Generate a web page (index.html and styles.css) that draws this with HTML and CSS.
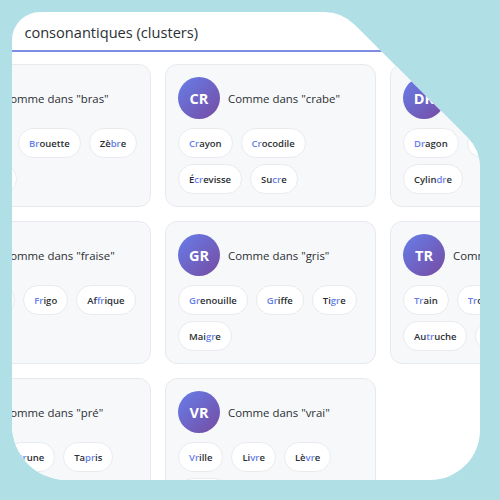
FILE: index.html
```html
<!DOCTYPE html>
<html lang="fr">
<head>
<meta charset="utf-8">
<title>Groupes consonantiques</title>
<link rel="stylesheet" href="styles.css">
</head>
<body>
<div class="panel">
  <div class="app">
    <header class="head"><h2 class="title"><span class="lead">Groupes</span>consonantiques (clusters)</h2></header>
    <div class="grid">
      <div class="card">
        <div class="card-head"><div class="avatar">BR</div><div class="label">Comme dans "bras"</div></div>
        <div class="chips">
          <span class="chip"><span class="hl">Br</span>ioche</span>
          <span class="chip"><span class="hl">Br</span>ouette</span>
          <span class="chip">Zè<span class="hl">br</span>e</span>
          <span class="chip">Cham<span class="hl">br</span>e</span>
        </div>
      </div>
      <div class="card">
        <div class="card-head"><div class="avatar">CR</div><div class="label">Comme dans "crabe"</div></div>
        <div class="chips">
          <span class="chip"><span class="hl">Cr</span>ayon</span>
          <span class="chip"><span class="hl">Cr</span>ocodile</span>
          <span class="chip">É<span class="hl">cr</span>evisse</span>
          <span class="chip">Su<span class="hl">cr</span>e</span>
        </div>
      </div>
      <div class="card">
        <div class="card-head"><div class="avatar">DR</div><div class="label">Comme dans "drap"</div></div>
        <div class="chips">
          <span class="chip"><span class="hl">Dr</span>agon</span>
          <span class="chip"><span class="hl">Dr</span>omadaire</span>
          <span class="chip">Cylin<span class="hl">dr</span>e</span>
        </div>
      </div>
      <div class="card">
        <div class="card-head"><div class="avatar">FR</div><div class="label">Comme dans "fraise"</div></div>
        <div class="chips">
          <span class="chip"><span class="hl">Fr</span>omage</span>
          <span class="chip"><span class="hl">Fr</span>igo</span>
          <span class="chip">Af<span class="hl">fr</span>ique</span>
        </div>
      </div>
      <div class="card">
        <div class="card-head"><div class="avatar">GR</div><div class="label">Comme dans "gris"</div></div>
        <div class="chips">
          <span class="chip"><span class="hl">Gr</span>enouille</span>
          <span class="chip"><span class="hl">Gr</span>iffe</span>
          <span class="chip">Ti<span class="hl">gr</span>e</span>
          <span class="chip">Mai<span class="hl">gr</span>e</span>
        </div>
      </div>
      <div class="card">
        <div class="card-head"><div class="avatar">TR</div><div class="label">Comme dans "train"</div></div>
        <div class="chips">
          <span class="chip"><span class="hl">Tr</span>ain</span>
          <span class="chip"><span class="hl">Tr</span>ompette</span>
          <span class="chip">Au<span class="hl">tr</span>uche</span>
          <span class="chip">Qua<span class="hl">tr</span>e</span>
        </div>
      </div>
      <div class="card">
        <div class="card-head"><div class="avatar">PR</div><div class="label">Comme dans "pré"</div></div>
        <div class="chips">
          <span class="chip"><span class="hl">Pr</span>ise</span>
          <span class="chip"><span class="hl">Pr</span>une</span>
          <span class="chip">Ta<span class="hl">pr</span>is</span>
        </div>
      </div>
      <div class="card">
        <div class="card-head"><div class="avatar">VR</div><div class="label">Comme dans "vrai"</div></div>
        <div class="chips">
          <span class="chip"><span class="hl">Vr</span>ille</span>
          <span class="chip">Li<span class="hl">vr</span>e</span>
          <span class="chip">Lè<span class="hl">vr</span>e</span>
          <span class="chip">Ou<span class="hl">vr</span>ir</span>
        </div>
      </div>
    </div>
  </div>
</div>
</body>
</html>
```
FILE: styles.css
```css
html, body {
  margin: 0;
  padding: 0;
}
body {
  background: #b0e0e6;
  font-family: "Open Sans", "Noto Sans", sans-serif;
  color: #2d3436;
  padding: 12px;
}
.panel {
  width: 468px;
  height: 468px;
  background: #ffffff;
  overflow: hidden;
  clip-path: path("M 28 0 H 312 Q 330 0 343 13 L 455 125 Q 468 138 468 156 V 418 A 50 50 0 0 1 418 468 H 55 A 55 55 0 0 1 0 413 V 28 A 28 28 0 0 1 28 0 Z");
}
.app {
  margin-left: -85px;
  width: 760px;
}
.head {
  height: 37px;
  border-bottom: 2px solid #7d8de6;
  display: flex;
  align-items: center;
  padding-left: 25px;
  padding-top: 1px;
}
.title {
  margin: 0;
  font-size: 14.6px;
  font-weight: 500;
  color: #2b2f33;
  white-space: nowrap;
}
.lead {
  margin-right: 14px;
}
.grid {
  display: grid;
  grid-template-columns: repeat(3, 211px);
  gap: 14px;
  padding: 12px 0 0 13px;
}
.card {
  background: #f7f8fa;
  border: 1px solid #e7e9ee;
  border-radius: 12px;
  padding: 12px;
  box-sizing: border-box;
}
.card-head {
  display: flex;
  align-items: center;
  gap: 8px;
  margin-bottom: 9px;
}
.avatar {
  flex: none;
  width: 42px;
  height: 42px;
  border-radius: 50%;
  background: linear-gradient(135deg, #667eea, #764ba2);
  color: #ffffff;
  font-weight: 700;
  font-size: 14.5px;
  display: flex;
  align-items: center;
  justify-content: center;
}
.label {
  font-size: 11.4px;
  color: #2b2f33;
  white-space: nowrap;
}
.chips {
  display: flex;
  flex-wrap: wrap;
  gap: 6px 8px;
}
.chip {
  height: 30px;
  box-sizing: border-box;
  display: inline-flex;
  align-items: center;
  padding: 0 10px;
  background: #ffffff;
  border: 1px solid #e8eaee;
  border-radius: 15px;
  font-size: 9.5px;
  font-weight: 600;
  color: #2b2f33;
  white-space: nowrap;
}
.hl {
  color: #667eea;
}
```
